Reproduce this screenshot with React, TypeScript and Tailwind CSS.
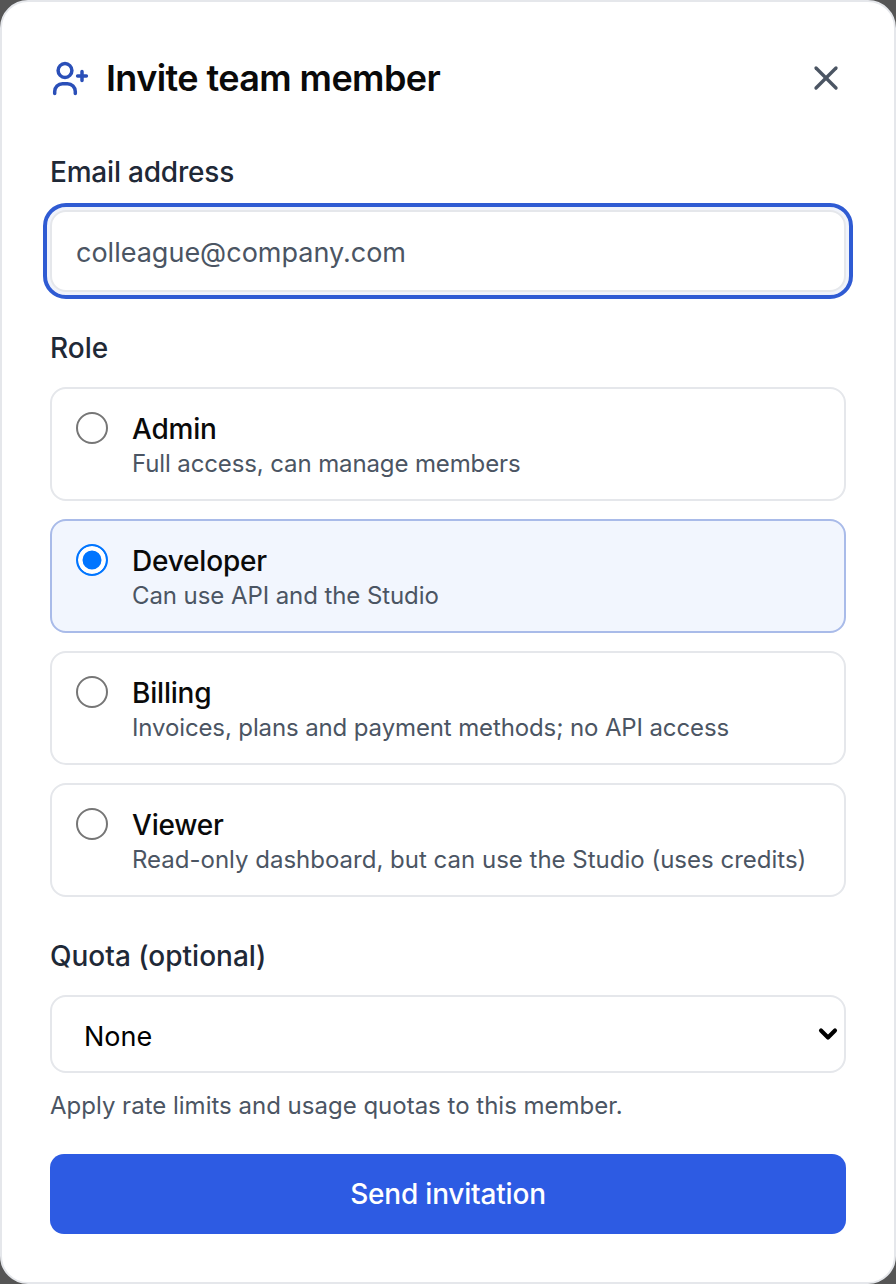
import { ChevronDown, X } from 'lucide-react';

const roles = [
  { id: 'admin', name: 'Admin', description: 'Full access, can manage members', spacing: 'tracking-[-0.12px]' },
  { id: 'developer', name: 'Developer', description: 'Can use API and the Studio', spacing: 'tracking-[-0.08px]' },
  { id: 'billing', name: 'Billing', description: 'Invoices, plans and payment methods; no API access', spacing: 'tracking-[-0.12px]' },
  { id: 'viewer', name: 'Viewer', description: 'Read-only dashboard, but can use the Studio (uses credits)', spacing: '' },
];

function InviteIcon() {
  return (
    <svg viewBox="0 0 40 40" fill="none" stroke="currentColor" strokeWidth={3.5} strokeLinecap="round" className="h-10 w-10 text-[#2a4fb8]">
      <circle cx="15" cy="12.5" r="6.9" />
      <path d="M4.7 35.4v-1.9a7.8 7.8 0 0 1 7.8-7.8h5a7.8 7.8 0 0 1 7.8 7.8v1.9" />
      <path d="M32 13.6v8.8M27.6 18h8.8" />
    </svg>
  );
}

export default function App() {
  return (
    <div className="min-h-[1284px] w-[896px] bg-[#555555] font-['Inter',sans-serif]">
      <div className="h-[1284px] rounded-[28px] border-2 border-[#e5e7eb] bg-white p-12">
        {/* Header */}
        <div className="flex h-14 items-center justify-between">
          <div className="flex items-center gap-4">
            <InviteIcon />
            <h2 className="text-[36px] font-semibold leading-14 tracking-[-0.6px] text-[#0a0a0a]">Invite team member</h2>
          </div>
          <button className="text-[#4b5563]">
            <X className="h-10 w-10" strokeWidth={2} />
          </button>
        </div>

        {/* Email */}
        <label className="mt-[46px] block text-[28px] font-medium leading-10 tracking-[-0.2px] text-[#1f2937]">Email address</label>
        <input
          placeholder="colleague@company.com"
          className="mt-[18px] block h-[82px] w-full rounded-[16px] border-2 border-[#e5e7eb] bg-white px-6 pt-[3px] text-[27px] text-[#111827] shadow-[0_0_0_3px_#f0f3fb] outline-4 outline-offset-[3px] outline-[#2f5bd3] placeholder:text-[#4b5563]"
        />

        {/* Role */}
        <div className="mt-9 pt-px text-[28px] font-medium leading-[39px] text-[#1f2937]">Role</div>
        <div className="mt-[19px] flex flex-col gap-[18px]">
          {roles.map((role) => (
            <label
              key={role.id}
              className={`flex items-start gap-6 rounded-[16px] border-2 px-6 py-[19px] ${
                role.id === 'developer' ? 'border-[#a9bbe9] bg-[#f2f6fe]' : 'border-[#e5e7eb] bg-white'
              }`}
            >
              <input
                type="radio"
                name="role"
                defaultChecked={role.id === 'developer'}
                className="mt-1 h-8 w-8 shrink-0 appearance-none rounded-full border-2 border-[#767676] bg-white checked:border-[#0075ff] checked:bg-[#0075ff] checked:shadow-[inset_0_0_0_4.5px_white]"
              />
              <span className="flex flex-col">
                <span className="pt-[2px] text-[28px] font-medium leading-[38px] tracking-[-0.2px] text-[#0a0a0a]">{role.name}</span>
                <span className={`text-[24px] leading-8 text-[#4b5563] ${role.spacing}`}>{role.description}</span>
              </span>
            </label>
          ))}
        </div>

        {/* Quota */}
        <div className="mt-[39px] pt-px text-[28px] font-medium leading-[39px] text-[#1f2937]">Quota (optional)</div>
        <div className="relative mt-[19px]">
          <select className="block h-[78px] w-full appearance-none rounded-[16px] border-2 border-[#e5e7eb] bg-white px-[32px] pt-[6px] text-[27px] text-black">
            <option>None</option>
          </select>
          <ChevronDown className="pointer-events-none absolute right-1 top-[25px] h-7 w-7 text-black" strokeWidth={3.5} />
        </div>
        <p className="mt-[17px] text-[24px] leading-8 text-[#4b5563]">Apply rate limits and usage quotas to this member.</p>

        <button className="mt-8 block h-20 w-full rounded-[14px] bg-[#2d5be3] text-[28px] font-medium tracking-[-0.2px] text-white">
          Send invitation
        </button>
      </div>
    </div>
  );
}
